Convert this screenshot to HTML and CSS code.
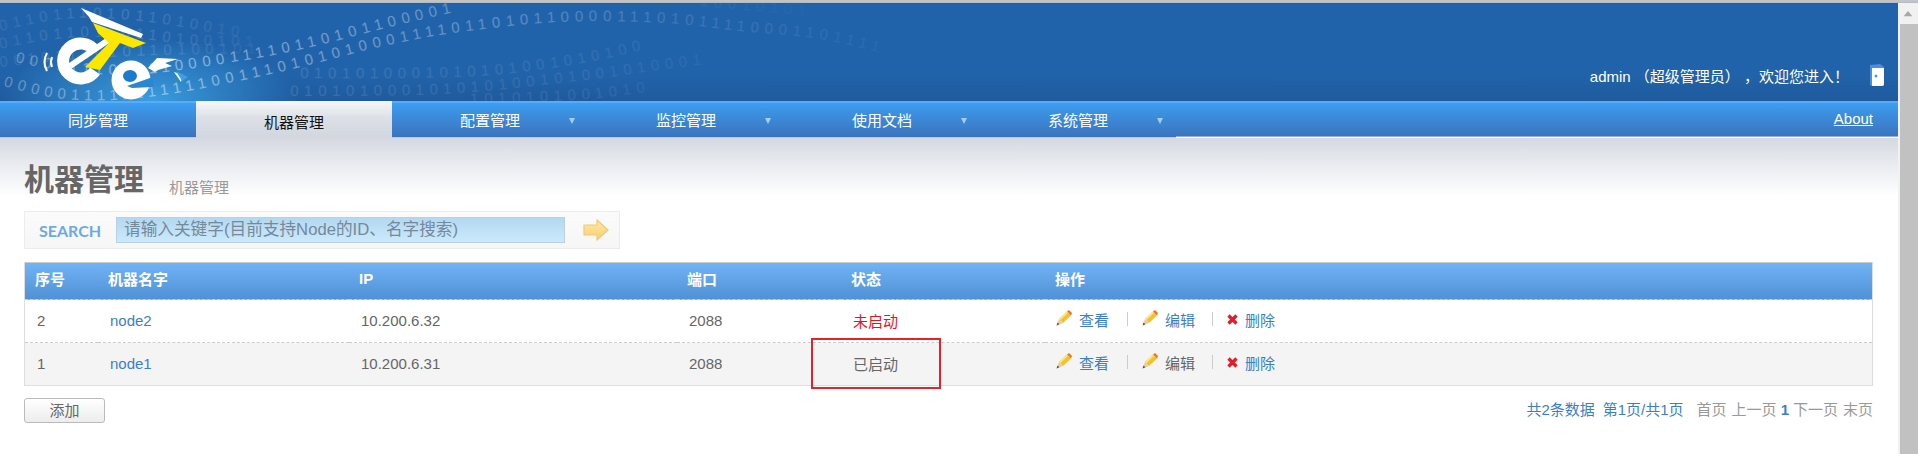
FILE: index.html
```html
<!DOCTYPE html>
<html lang="zh-CN">
<head>
<meta charset="utf-8">
<title>机器管理</title>
<link rel="stylesheet" href="styles.css">
</head>
<body>
<div class="topline"></div>
<div class="window">
  <div class="main">
    <header class="header">
      <svg class="header-art" viewBox="0 3 1898 98" aria-hidden="true">
        <defs>
          <linearGradient id="fade" gradientUnits="userSpaceOnUse" x1="0" y1="0" x2="900" y2="0">
            <stop offset="0" stop-color="#fff" stop-opacity=".28"/>
            <stop offset=".2" stop-color="#fff" stop-opacity=".44"/>
            <stop offset=".58" stop-color="#fff" stop-opacity=".26"/>
            <stop offset=".75" stop-color="#fff" stop-opacity=".13"/>
            <stop offset="1" stop-color="#fff" stop-opacity=".03"/>
          </linearGradient>
          <linearGradient id="fadeDim" gradientUnits="userSpaceOnUse" x1="280" y1="0" x2="800" y2="0">
            <stop offset="0" stop-color="#fff" stop-opacity=".12"/>
            <stop offset=".6" stop-color="#fff" stop-opacity=".08"/>
            <stop offset="1" stop-color="#fff" stop-opacity=".02"/>
          </linearGradient>
          <linearGradient id="fadeLeft" gradientUnits="userSpaceOnUse" x1="0" y1="0" x2="270" y2="0">
            <stop offset="0" stop-color="#fff" stop-opacity=".08"/>
            <stop offset=".5" stop-color="#fff" stop-opacity=".15"/>
            <stop offset="1" stop-color="#fff" stop-opacity=".03"/>
          </linearGradient>
          <path id="rowA" d="M15,62 Q60,72 95,74 Q130,76 155,73 Q180,71 233,62 Q287,54 343,39 Q400,24 441,15 L495,3"/>
          <path id="rowB" d="M3,86 Q33,94 50,97 Q67,100 92,100.5 Q117,101 152,96.5 Q187,92 223,84 Q260,77 296,68 Q333,59 366,50 Q400,42 433,36 Q467,31 508,26 Q550,21 608,21 Q667,22 700,26 Q733,31 775,34 Q817,37 850,45 L890,55"/>
          <path id="rowC" d="M300,78 Q400,79 450,77 Q500,76 550,68 Q600,61 633,52 Q667,44 700,40 L740,36"/>
          <path id="rowD" d="M290,96 Q400,96 441,94 Q483,92 541,85 Q600,79 650,71 Q700,64 745,61 L795,58"/>
          <path id="rowE" d="M470,104 Q550,102 600,98 Q650,92 700,84 L740,80"/>
          <path id="rowF" d="M700,6 Q760,11 825,18"/>
          <path id="rowL1" d="M0,31 Q50,19 75,18 Q100,17 133,20 Q167,24 187,28 L245,38"/>
          <path id="rowL2" d="M0,49 Q50,37 90,37 Q133,37 167,42 Q200,47 267,46"/>
          <path id="rowL3" d="M0,67 Q60,60 110,57 Q170,54 270,53"/>
        </defs>
        <text class="digits dim-left"><textPath href="#rowL1">0110111010110100101</textPath></text>
        <text class="digits dim-left"><textPath href="#rowL2">0110110110110100101</textPath></text>
        <text class="digits dim-left"><textPath href="#rowL3">0010111010110100101</textPath></text>
        <text class="digits bright"><textPath href="#rowA">000111100111000011110110101100001</textPath></text>
        <text class="digits bright"><textPath href="#rowB">000001111111111100111010101000111101101011000011101011110001101111001</textPath></text>
        <text class="digits dim"><textPath href="#rowC">0101010001010101001010100</textPath></text>
        <text class="digits dim"><textPath href="#rowD">010101000101010100101001010001</textPath></text>
        <text class="digits dim"><textPath href="#rowE">1010101001010</textPath></text>
        <text class="digits dim"><textPath href="#rowF">10010101</textPath></text>

        <g class="logo">
          <path class="logo-arc" d="M95,51 A17.500,17.500 0 1 0 95,71"/>
          <path class="logo-bar" d="M70,66 L110,39"/>
          <polygon class="logo-white" points="81,8 143,34 141,38 92,22 89,17"/>
          <polygon class="logo-yellow" points="93,23 146,43 133,48 120,43 100,70 85,67 109,43 98,33"/>
          <circle class="logo-white" cx="131" cy="80" r="19.500"/>
          <ellipse class="logo-inner" cx="130" cy="76" rx="7" ry="6"/>
          <polygon class="logo-notch" points="127,86 153,77 153,87 132,88"/>
          <polygon class="logo-white" points="148,68 157,58 178,59 165,63 172,66 158,70 155,72"/>
          <polygon class="logo-white" points="174,72 183,75 181,82"/>
          <polygon class="logo-blue" points="176,71 188,77 182,81"/>
          <path class="logo-thin" d="M47,53 Q42,62 47,71"/>
          <path class="logo-thin" d="M52,57 Q50,62 52,67"/>
        </g>
      </svg>
      <div class="user">
        <span class="user-text">admin （超级管理员） ，欢迎您进入！</span>
        <svg class="door" viewBox="0 0 16 22" aria-hidden="true">
          <path d="M1,1 L11,0 L15,3 L15,20 Q15,22 13,22 L3,22 Q1,22 1,20 Z" fill="#4d8fd6"/>
          <path d="M3,4 L15,4 L15,20 Q15,22 13,22 L3,22 Z" fill="#fff"/>
          <circle cx="7" cy="12" r="1.5" fill="#5d93d0"/>
        </svg>
      </div>
    </header>

    <nav class="nav">
      <a class="tab">同步管理</a>
      <a class="tab active">机器管理</a>
      <a class="tab drop">配置管理</a>
      <a class="tab drop">监控管理</a>
      <a class="tab drop">使用文档</a>
      <a class="tab drop">系统管理</a>
      <div class="nav-rest"><a class="about">About</a></div>
    </nav>

    <section class="content">
      <div class="title-row">
        <h1 class="title">机器管理</h1>
        <span class="subtitle">机器管理</span>
      </div>

      <div class="search">
        <span class="search-label">SEARCH</span>
        <input class="search-input" type="text" placeholder="请输入关键字(目前支持Node的ID、名字搜索)">
        <svg class="search-go" viewBox="0 0 26 22" aria-hidden="true">
          <defs>
            <linearGradient id="go" x1="0" y1="0" x2="0" y2="1">
              <stop offset="0" stop-color="#ffe9a6"/>
              <stop offset="1" stop-color="#f9cf6e"/>
            </linearGradient>
          </defs>
          <polygon points="1,6 14,6 14,1 25,11 14,21 14,16 1,16" fill="url(#go)" stroke="#f0c878" stroke-width="1.2"/>
        </svg>
      </div>

      <div class="table-wrap">
        <table class="grid">
          <colgroup>
            <col class="c1"><col class="c2"><col class="c3"><col class="c4"><col class="c5"><col>
          </colgroup>
          <thead>
            <tr><th>序号</th><th>机器名字</th><th>IP</th><th>端口</th><th>状态</th><th>操作</th></tr>
          </thead>
          <tbody>
            <tr>
              <td>2</td><td><a class="link">node2</a></td><td>10.200.6.32</td><td>2088</td>
              <td class="off">未启动</td>
              <td>
                <div class="actions">
                  <svg class="pencil" viewBox="0 0 16 16" aria-hidden="true"><polygon points="3,9 11,1.500 15,5.500 7,13" fill="#f3c22a"/><polygon points="3,9 11,1.500 12.300,2.800 4.300,10.300" fill="#fbe585"/><polygon points="11,1.500 13,0 16,3 15,5.500" fill="#e8772a"/><polygon points="3,9 7,13 0.500,15.500" fill="#e6cba8"/><polygon points="1.500,12.500 3.500,14.200 0.500,15.500" fill="#7a4a22"/></svg>
                  <a class="link act-text">查看</a><i class="sep"></i>
                  <svg class="pencil" viewBox="0 0 16 16" aria-hidden="true"><polygon points="3,9 11,1.500 15,5.500 7,13" fill="#f3c22a"/><polygon points="3,9 11,1.500 12.300,2.800 4.300,10.300" fill="#fbe585"/><polygon points="11,1.500 13,0 16,3 15,5.500" fill="#e8772a"/><polygon points="3,9 7,13 0.500,15.500" fill="#e6cba8"/><polygon points="1.500,12.500 3.500,14.200 0.500,15.500" fill="#7a4a22"/></svg>
                  <a class="link act-text">编辑</a><i class="sep sep2"></i>
                  <svg class="cross" viewBox="0 0 11 11" aria-hidden="true"><path d="M1.500,1.500 L9.500,9.500 M9.500,1.500 L1.500,9.500"/></svg>
                  <a class="link act-text">删除</a>
                </div>
              </td>
            </tr>
            <tr class="alt">
              <td>1</td><td><a class="link">node1</a></td><td>10.200.6.31</td><td>2088</td>
              <td>已启动</td>
              <td>
                <div class="actions">
                  <svg class="pencil" viewBox="0 0 16 16" aria-hidden="true"><polygon points="3,9 11,1.500 15,5.500 7,13" fill="#f3c22a"/><polygon points="3,9 11,1.500 12.300,2.800 4.300,10.300" fill="#fbe585"/><polygon points="11,1.500 13,0 16,3 15,5.500" fill="#e8772a"/><polygon points="3,9 7,13 0.500,15.500" fill="#e6cba8"/><polygon points="1.500,12.500 3.500,14.200 0.500,15.500" fill="#7a4a22"/></svg>
                  <a class="link act-text">查看</a><i class="sep"></i>
                  <svg class="pencil" viewBox="0 0 16 16" aria-hidden="true"><polygon points="3,9 11,1.500 15,5.500 7,13" fill="#f3c22a"/><polygon points="3,9 11,1.500 12.300,2.800 4.300,10.300" fill="#fbe585"/><polygon points="11,1.500 13,0 16,3 15,5.500" fill="#e8772a"/><polygon points="3,9 7,13 0.500,15.500" fill="#e6cba8"/><polygon points="1.500,12.500 3.500,14.200 0.500,15.500" fill="#7a4a22"/></svg>
                  <a class="act-text gray">编辑</a><i class="sep sep2"></i>
                  <svg class="cross" viewBox="0 0 11 11" aria-hidden="true"><path d="M1.500,1.500 L9.500,9.500 M9.500,1.500 L1.500,9.500"/></svg>
                  <a class="link act-text">删除</a>
                </div>
              </td>
            </tr>
          </tbody>
        </table>
        <div class="red-box"></div>
      </div>

      <div class="footer">
        <button class="add" type="button">添加</button>
        <div class="pager">
          <span class="link">共2条数据</span>
          <span class="link page-of">第1页/共1页</span>
          <span class="muted first">首页</span>
          <span class="muted">上一页</span>
          <b class="link current">1</b>
          <span class="muted">下一页</span>
          <span class="muted">末页</span>
        </div>
      </div>
    </section>
  </div>

  <aside class="scrollbar">
    <svg class="scroll-up" viewBox="0 0 20 24" aria-hidden="true"><polygon points="5,15 10,9 15,15" fill="#a8a8a8"/></svg>
    <div class="scroll-thumb"></div>
  </aside>
</div>
</body>
</html>
```

FILE: styles.css
```css
* { box-sizing: border-box; }

html, body {
  margin: 0;
  height: 100%;
  overflow: hidden;
  background: #fff;
}

body {
  font-family: "Liberation Sans", "Noto Sans CJK SC", sans-serif;
  font-size: 15px;
  color: #666;
  display: flex;
  flex-direction: column;
}

.topline {
  height: 3px;
  flex: none;
  background: linear-gradient(#c4c4c4 0, #c4c4c4 2px, #9fb4cc 3px);
}

.window {
  flex: 1;
  display: flex;
  min-height: 0;
}

.main {
  flex: 1;
  min-width: 0;
}

/* header */
.header {
  position: relative;
  height: 98px;
  display: flex;
  justify-content: flex-end;
  align-items: flex-end;
  padding: 0 13px 15px 0;
  background:
    radial-gradient(ellipse 150px 62px at 150px 100%, rgba(62, 170, 235, .85), rgba(62, 170, 235, 0)),
    linear-gradient(#2163aa 0, #2163aa 72%, #1f5a9d 100%);
  overflow: hidden;
}

.header-art {
  position: absolute;
  left: 0;
  top: 0;
  width: 1898px;
  height: 98px;
}

.digits {
  font-family: "Liberation Sans", sans-serif;
  font-size: 15px;
  letter-spacing: 5.6px;
}
.bright { fill: url(#fade); }
.dim { fill: url(#fadeDim); }
.dim-left { fill: url(#fadeLeft); }

.logo-arc { fill: none; stroke: #fff; stroke-width: 12; }
.logo-bar { fill: none; stroke: #fff; stroke-width: 6; }
.logo-inner { fill: #1d7bcf; }
.logo-notch { fill: #2a86d2; }
.logo-white { fill: #fff; }
.logo-yellow { fill: #fbe700; }
.logo-blue { fill: #3f9fe6; }
.logo-thin { fill: none; stroke: #fff; stroke-width: 2; }

.user {
  position: relative;
  display: flex;
  align-items: center;
  gap: 20px;
  color: #fff;
  white-space: pre;
}

.user-text { padding-top: 2px; }

.door {
  width: 16px;
  height: 22px;
}

/* nav */
.nav {
  display: flex;
  height: 37px;
  color: #fff;
  background: linear-gradient(#3c9ff2 0, #3b8fe0 30%, #3b72bb 100%);
  border-top: 2px solid #57acf7;
}

.tab {
  position: relative;
  flex: none;
  width: 196px;
  text-align: center;
  line-height: 37px;
  margin-top: -1px;
  border-bottom: 1px solid #b3cbe8;
  height: 36px;
}

.tab.active {
  margin-top: -2px;
  height: 37px;
  line-height: 43px;
  color: #111;
  border-bottom: 0;
  background: linear-gradient(#f6f7f9 0, #dde0e6 45%, #d1d6df 100%);
}

.drop::after {
  content: "";
  position: absolute;
  right: 13px;
  top: 16px;
  border-style: solid;
  border-width: 6px 3.5px 0;
  border-color: #a3cff7 transparent transparent;
}

.nav-rest {
  flex: 1;
  display: flex;
  justify-content: flex-end;
  padding-right: 25px;
  height: 36px;
  margin-top: -1px;
  border-bottom: 1px solid #fff;
  box-shadow: inset 0 -1px 0 #8fb0da;
}

.about {
  color: #fff;
  text-decoration: underline;
  line-height: 33px;
}

/* content */
.content {
  padding: 0 25px 0 24px;
  background: linear-gradient(#d5d8e0 0, #e6e8ed 22px, #fff 58px);
}

.title-row {
  display: flex;
  align-items: flex-start;
  height: 73px;
  padding-top: 20px;
}

.title {
  margin: 0;
  font-size: 30px;
  line-height: 44px;
  font-weight: 700;
  color: #666;
}

.subtitle {
  margin: 21px 0 0 25px;
  line-height: 18px;
  color: #999;
}

.search {
  width: 596px;
  height: 38px;
  display: flex;
  align-items: center;
  border: 1px solid #ececec;
  background: linear-gradient(#fbfbfb, #f6f6f6);
  padding-left: 14px;
}

.search-label {
  width: 77px;
  font-family: Lato, "Liberation Sans", sans-serif;
  font-weight: 700;
  font-size: 16px;
  color: #6da9e8;
}

.search-input {
  width: 449px;
  height: 26px;
  border: 1px solid #b8d2e3;
  padding: 0 7px;
  font-family: inherit;
  font-size: 16.67px;
  background: linear-gradient(#b4d8f1, #cbe9fb);
  outline: 0;
}

.search-input::placeholder {
  color: #75899a;
  opacity: 1;
}

.search-go {
  width: 26px;
  height: 22px;
  margin-left: 18px;
}

/* table */
.table-wrap {
  position: relative;
  margin-top: 13px;
}

.grid {
  width: 100%;
  table-layout: fixed;
  border-collapse: separate;
  border-spacing: 0;
  border-left: 1px solid #ddd;
  border-right: 1px solid #ddd;
  border-bottom: 1px solid #ddd;
}

.c1 { width: 73px; }
.c2 { width: 251px; }
.c3 { width: 328px; }
.c4 { width: 164px; }
.c5 { width: 204px; }

.grid th {
  height: 38px;
  padding: 0 10px 5px;
  text-align: left;
  font-weight: 700;
  color: #fff;
  background: linear-gradient(#70b3f6, #5191d5);
  border-top: 1px solid #ccc;
  border-bottom: 1px dashed #ccc;
}

.grid td {
  height: 43px;
  padding: 0 12px 2px;
  background: #fff;
  border-bottom: 1px dashed #ccc;
}

.grid .alt td {
  height: 42px;
  background: #f4f4f4;
  border-bottom: 0;
}

.off { color: #e8121c; }
.link { color: #3a7fcb; }
.gray { color: #666; }

.actions {
  display: flex;
  align-items: center;
  margin-left: -1px;
  padding-bottom: 2px;
}

.pencil {
  width: 16px;
  height: 16px;
  flex: none;
  margin-top: -2px;
}

.act-text { margin-left: 7px; }

.sep {
  width: 1px;
  height: 14px;
  background: #ccc;
  margin: 0 14px 0 18px;
}

.sep2 { margin: 0 14px 0 17px; }

.cross {
  width: 11px;
  height: 11px;
  flex: none;
}

.cross path {
  fill: none;
  stroke: #e31c25;
  stroke-width: 3.2;
}

.red-box {
  position: absolute;
  left: 787px;
  top: 76px;
  width: 130px;
  height: 51px;
  border: 2px solid #e8202a;
}

/* footer */
.footer {
  display: flex;
  justify-content: space-between;
  align-items: center;
  margin-top: 12px;
}

.add {
  width: 81px;
  height: 25px;
  padding: 0 0 2px;
  font-family: inherit;
  font-size: 15px;
  color: #666;
  border: 1px solid #bbb;
  border-radius: 3px;
  background: linear-gradient(#fff, #ececec);
}

.pager {
  display: flex;
  align-items: baseline;
  gap: 5px;
  margin-top: -4px;
}

.page-of { margin-left: 3px; }
.first { margin-left: 8px; }
.muted { color: #999; }
.current { margin: 0 -1px; }

/* scrollbar */
.scrollbar {
  flex: none;
  width: 20px;
  display: flex;
  flex-direction: column;
  background: #f1f1f1;
}

.scroll-up {
  width: 20px;
  height: 21px;
  flex: none;
}

.scroll-thumb {
  flex: 1;
  margin-left: 2px;
  background: #c1c1c1;
}
```
